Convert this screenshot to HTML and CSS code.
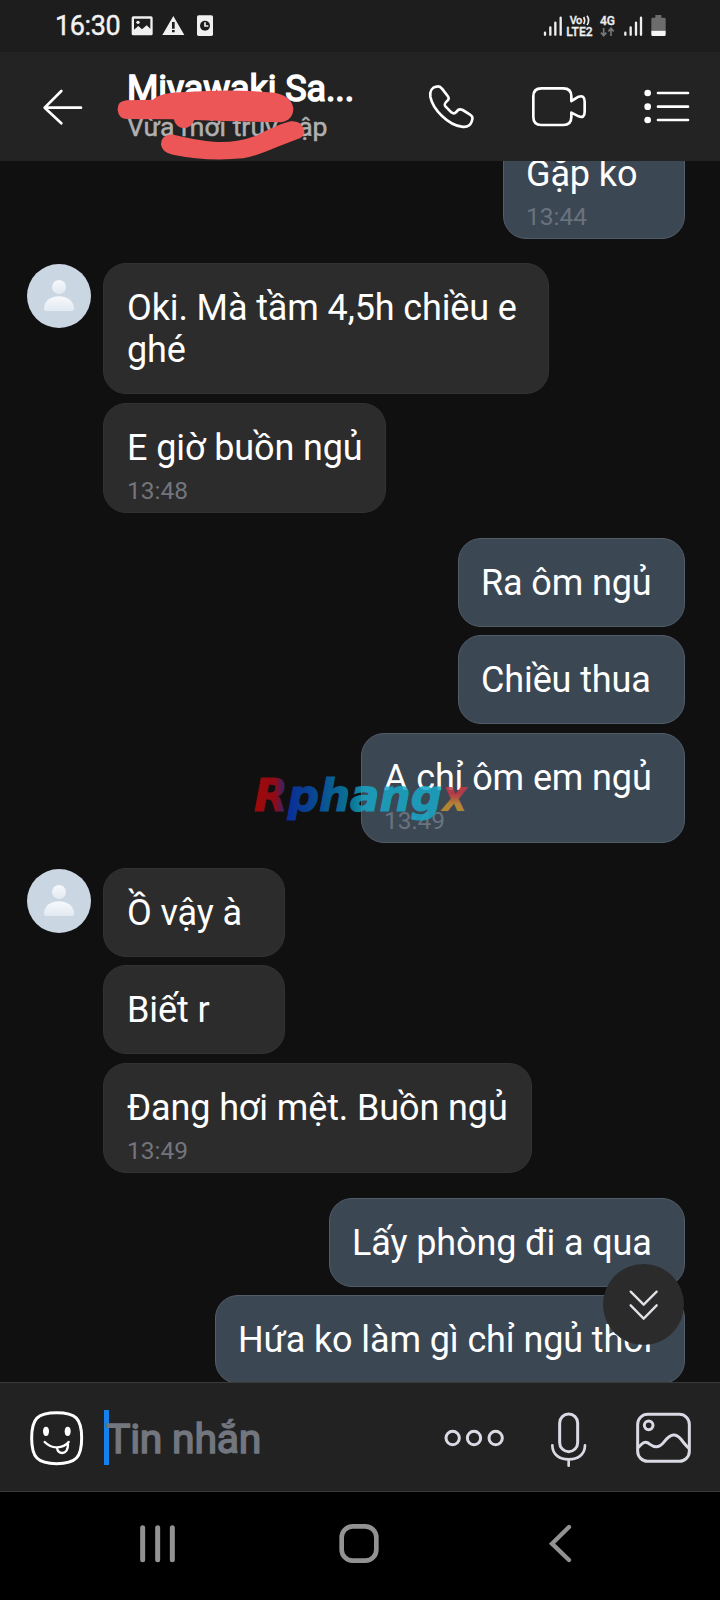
FILE: index.html
```html
<!DOCTYPE html>
<html lang="vi">
<head>
<meta charset="utf-8">
<title>Tin nhắn</title>
<link rel="stylesheet" href="styles.css">
</head>
<body>
<div class="phone">
  <div class="status">
    <span class="clock">16:30</span>
    <svg class="status-left" viewBox="375 0 300 156">
      <g fill="#f0f0f0">
        <path fill-rule="evenodd" d="M400 49h53q5 0 5 5v47q0 5-5 5h-53q-5 0-5-5V54q0-5 5-5zM402 56v33l13-11 11 10 14-12 11 10V56z"/>
        <circle cx="414" cy="67" r="5"/>
        <path fill-rule="evenodd" d="M520 48l33 57h-66zM516 66v20h8V66zM516 90v7h8v-7z"/>
        <path d="M596 46h38q5 0 5 5v52q0 5-5 5h-38q-5 0-5-5V51q0-5 5-5z"/>
      </g>
      <circle cx="615" cy="77" r="15" fill="#1d1d1d"/>
      <path d="M615 67v11h10" fill="none" stroke="#f0f0f0" stroke-width="5"/>
    </svg>
    <svg class="status-right" viewBox="540 0 540 156">
      <g stroke="#eee" stroke-width="7" stroke-linecap="round">
        <path d="M555 98v6M571 82v22M586 68v36M602 53v51M796 98v6M812 82v22M828 68v36M843 53v51"/>
      </g>
      <g fill="#eee" stroke="#eee" stroke-width="1" font-family="Roboto, sans-serif" font-weight="500">
        <text x="629" y="72" font-size="33" textLength="38">Vo</text>
        <text x="619" y="107" font-size="36" textLength="79">LTE2</text>
        <text x="720" y="75" font-size="36" textLength="45">4G</text>
      </g>
      <path d="M671 51q6 10 0 21M681 47q10 14 0 28" fill="none" stroke="#eee" stroke-width="5"/>
      <path d="M731 84v23M723 98l8 9 8-9M753 108V85M745 94l8-9 8 9" fill="none" stroke="#777" stroke-width="5"/>
      <path d="M886 45h18v8h9q4 0 4 4v35h-43V57q0-4 4-4h8z" fill="#6c6c6c"/>
      <path d="M874 92h43v12q0 4-4 4h-35q-4 0-4-4z" fill="#f5f5f5"/>
    </svg>
  </div>

  <header class="header">
    <svg class="h-back" viewBox="0 156 381 327"><path d="M243 323H136M184 273l-50 50 50 47" fill="none" stroke="#fff" stroke-width="8" stroke-linecap="round" stroke-linejoin="round"/></svg>
    <div class="who">
      <div class="name">Miyawaki Sa...</div>
      <div class="seen">Vừa mới truy cập</div>
    </div>
    <svg class="h-phone" viewBox="60 156 360 327"><path d="M229 260C216 262 209 274 211 290C219 330 265 374 305 380C323 383 331 376 335 365C340 352 337 348 329 343L308 330C300 326 293 329 289 336C284 341 279 341 274 337L257 320C252 314 253 311 260 304C268 299 267 293 263 288L246 266C241 259 236 258 229 260Z" fill="none" stroke="#fff" stroke-width="8" stroke-linejoin="round"/></svg>
    <svg class="h-video" viewBox="420 156 330 327"><path d="M634 303V289Q634 265 610 265H544Q520 265 520 289V351Q520 375 544 375H610Q634 375 634 351V338L656 349Q674 356 674 335V305Q674 284 656 290Z" fill="none" stroke="#fff" stroke-width="8" stroke-linejoin="round"/></svg>
    <svg class="h-list" viewBox="750 156 330 327">
      <g fill="#fff"><circle cx="863" cy="279" r="10"/><circle cx="863" cy="320" r="10"/><circle cx="863" cy="360" r="10"/></g>
      <path d="M894 279h90M894 320h90M894 360h90" stroke="#fff" stroke-width="8" stroke-linecap="round"/>
    </svg>
    <svg class="scribble" viewBox="340 210 600 273" fill="#ed5656">
      <path d="M380 301Q352 304 354 330Q357 357 382 357L522 358Q530 384 553 385Q576 382 584 360Q700 364 845 367Q881 360 881 325Q876 288 825 278Q700 266 560 276Q480 277 460 299Z"/>
      <path d="M516 403Q483 406 484 434Q488 458 520 464Q620 485 730 475Q770 468 830 442L900 415Q920 405 912 386Q903 362 874 364Q840 371 770 407Q710 429 650 426Q590 422 516 403Z"/>
    </svg>
  </header>

  <main class="chat">
    <section class="group mine first">
      <div class="bubble w-182"><p>Gặp ko</p><time>13:44</time></div>
    </section>
    <section class="group theirs">
      <svg class="avatar" viewBox="0 0 192 192"><use href="#person"/></svg>
      <div class="stack">
        <div class="bubble tall w-446"><p>Oki. Mà tầm 4,5h chiều e<br>ghé</p></div>
        <div class="bubble timed w-283"><p>E giờ buồn ngủ</p><time>13:48</time></div>
      </div>
    </section>
    <section class="group mine">
      <div class="bubble w-227"><p>Ra ôm ngủ</p></div>
      <div class="bubble w-227"><p>Chiều thua</p></div>
      <div class="bubble timed w-324"><p>A chỉ ôm em ngủ</p><time>13:49</time></div>
    </section>
    <section class="group theirs">
      <svg class="avatar" viewBox="0 0 192 192"><use href="#person"/></svg>
      <div class="stack">
        <div class="bubble w-182"><p>Ồ vậy à</p></div>
        <div class="bubble w-182"><p>Biết r</p></div>
        <div class="bubble timed w-429"><p>Đang hơi mệt. Buồn ngủ</p><time>13:49</time></div>
      </div>
    </section>
    <section class="group mine">
      <div class="bubble w-356"><p>Lấy phòng đi a qua</p></div>
      <div class="bubble w-470"><p>Hứa ko làm gì chỉ ngủ thôi</p></div>
    </section>

    <svg class="watermark" viewBox="0 0 240 80">
      <defs>
        <linearGradient id="wm" gradientUnits="userSpaceOnUse" x1="14" y1="0" x2="227" y2="0">
          <stop offset="0" stop-color="#b80808"/><stop offset=".1" stop-color="#a80a18"/><stop offset=".16" stop-color="#0a35b0"/>
          <stop offset=".25" stop-color="#0848a8"/><stop offset=".46" stop-color="#0a88ac"/><stop offset=".52" stop-color="#18a8c8"/><stop offset=".87" stop-color="#18a8c8"/>
        </linearGradient>
        <linearGradient id="wx" gradientUnits="userSpaceOnUse" x1="0" y1="26" x2="0" y2="52"><stop offset=".3" stop-color="#c83848"/><stop offset=".7" stop-color="#c89030"/></linearGradient>
      </defs>
      <text class="wm-main" x="14" y="51" font-size="44" textLength="188" lengthAdjust="spacingAndGlyphs" fill="url(#wm)" stroke="url(#wm)">Rphang</text>
      <text x="202" y="51" font-size="44" textLength="25" lengthAdjust="spacingAndGlyphs" fill="url(#wx)">x</text>
    </svg>
    <svg class="to-end" viewBox="1208 253 243 243"><path d="M1291 336l39 39 39-39M1291 377l39 40 39-40" fill="none" stroke="#e0e1e6" stroke-width="7" stroke-linecap="round" stroke-linejoin="round"/></svg>
  </main>

  <footer class="composer">
    <svg class="c-smile" viewBox="0 39 312 324">
      <path d="M170 128C112 128 95 146 95 204S112 281 170 281S245 262 245 204S228 128 170 128Z" fill="none" stroke="#fff" stroke-width="9"/>
      <ellipse cx="138" cy="184" rx="9" ry="14" fill="#fff"/><ellipse cx="203" cy="184" rx="9" ry="14" fill="#fff"/>
      <path d="M134 216Q151 233 171 232Q194 231 206 216M171 233Q173 249 187 249Q204 248 204 223" fill="none" stroke="#fff" stroke-width="7" stroke-linecap="round"/>
    </svg>
    <div class="field"><span class="caret"></span><span class="hint">Tin nhắn</span></div>
    <svg class="c-tools" viewBox="240 39 840 324" fill="none" stroke="#d9dae4" stroke-width="9">
      <circle cx="278" cy="204" r="20"/><circle cx="342" cy="204" r="20"/><circle cx="407" cy="204" r="20"/>
      <rect x="599" y="132" width="54" height="113" rx="27"/>
      <path d="M577 226C577 254 599 268 626 268S675 254 675 226M626 268v19" stroke-linecap="round" stroke-width="8"/>
      <rect x="833" y="133" width="155" height="141" rx="30"/>
      <circle cx="866" cy="166" r="13"/>
      <path d="M835 233C847 218 856 211 870 223C886 235 899 232 911 217C933 189 948 190 963 208C972 219 979 229 987 235"/>
    </svg>
  </footer>

  <nav class="navbar">
    <svg viewBox="0 366 2160 324" fill="none" stroke="#929292" stroke-linecap="round">
      <path d="M428 473v96M473 473v96M517 473v96" stroke-width="15"/>
      <rect x="1025" y="469" width="104" height="103" rx="33" stroke-width="14"/>
      <path d="M1707 471l-51 50 51 49" stroke-width="13"/>
    </svg>
  </nav>
</div>

<svg class="defs" width="0" height="0">
  <defs>
    <linearGradient id="body" x1="0" y1="0" x2="0" y2="1"><stop offset="0" stop-color="#f6f9fc"/><stop offset="1" stop-color="#e2e9f1"/></linearGradient>
    <g id="person">
      <circle cx="96" cy="96" r="96" fill="#cbd6e3"/>
      <circle cx="96" cy="69" r="21" fill="url(#body)"/>
      <path d="M51 134C51 109 74 97 96 97S141 109 141 134Q141 141 134 141H58Q51 141 51 134Z" fill="url(#body)"/>
    </g>
  </defs>
</svg>
</body>
</html>
```

FILE: styles.css
```css
* { box-sizing: border-box; }
body { margin: 0; background: #101010; font-family: Roboto, "Noto Sans", sans-serif; }
svg { display: block; flex: none; }
p { margin: 0; }
.defs { position: absolute; }
.phone { width: 720px; height: 1600px; display: flex; flex-direction: column; overflow: hidden; }

.status { height: 52px; flex: none; display: flex; background: #1d1d1d; color: #f2f2f2; }
.clock { width: 70px; margin-left: 55px; font-size: 27px; line-height: 53px; letter-spacing: -0.4px; white-space: nowrap; -webkit-text-stroke: 0.4px #f2f2f2; }
.status-left { width: 100px; height: 52px; }
.status-right { width: 180px; height: 52px; margin-left: auto; }

.header { height: 109px; flex: none; display: flex; background: #232323; position: relative; }
.h-back { width: 127px; height: 109px; }
.who { width: 253px; padding-top: 16px; white-space: nowrap; }
.name { color: #fff; font-size: 36px; line-height: 42px; letter-spacing: -0.1px; -webkit-text-stroke: 1.5px #fff; }
.seen { color: #b0b0b0; font-size: 26.6px; line-height: 30px; margin-top: 2px; -webkit-text-stroke: 0.5px #b0b0b0; }
.h-phone { width: 120px; height: 109px; }
.h-video, .h-list { width: 110px; height: 109px; }
.scribble { position: absolute; left: 113.33px; top: 18px; width: 200px; height: 91px; }

.chat { height: 1221px; flex: none; position: relative; overflow: hidden; background: #101010; }
.group { margin-top: 25px; }
.group.first { margin-top: -32px; }
.group.first + .group { margin-top: 24px; }
.mine { display: flex; flex-direction: column; align-items: flex-end; padding-right: 35px; }
.theirs { display: flex; align-items: flex-start; padding-left: 27px; gap: 12px; }
.avatar { width: 64px; height: 64px; margin-top: 0.5px; }
.stack { display: flex; flex-direction: column; }
.bubble { height: 89px; padding: 23px 0 0 23px; border: 1px solid #323232; border-radius: 23px; background: #2c2c2c; color: #fff; font-size: 36px; line-height: 42px; letter-spacing: -0.12px; white-space: nowrap; }
.bubble + .bubble { margin-top: 8px; }
.bubble + .timed { margin-top: 9px; }
.bubble:has(time) { height: 110px; padding-top: 22.5px; }
.bubble.tall { height: 131px; }
.mine .bubble { padding-left: 22px; background: #3c4754; border-color: #525d6a; }
.bubble time { display: block; margin-top: 8px; font-size: 24.5px; line-height: 28px; letter-spacing: 0; color: #72757c; }
.mine .bubble time { color: #69737e; }
.w-182 { width: 182px; }
.w-227 { width: 227px; }
.w-283 { width: 283px; }
.w-324 { width: 324px; }
.w-356 { width: 356px; }
.w-429 { width: 429px; }
.w-446 { width: 446px; }
.w-470 { width: 470px; }

.watermark { position: absolute; left: 240px; top: 599px; width: 240px; height: 80px; opacity: 0.85; font-family: "DejaVu Sans", sans-serif; font-weight: bold; font-style: italic; }
.wm-main { stroke-width: 1.2px; }
.to-end { position: absolute; left: 603px; top: 1103px; width: 81px; height: 81px; border-radius: 50%; background: #2b2b2b; }

.composer { height: 110px; flex: none; display: flex; background: #222; border-top: 1px solid #3a3a3a; border-bottom: 1px solid #3a3a3a; }
.c-smile { width: 104px; height: 108px; }
.field { width: 336px; display: flex; padding-top: 27px; }
.caret { width: 5px; height: 55px; background: #1581ee; }
.hint { margin-left: -3px; color: #72767f; font-size: 41px; line-height: 58px; letter-spacing: -0.3px; white-space: nowrap; -webkit-text-stroke: 1.5px #72767f; }
.c-tools { width: 280px; height: 108px; }
.navbar { height: 108px; flex: none; background: #000; }
.navbar svg { width: 720px; height: 108px; }
```
